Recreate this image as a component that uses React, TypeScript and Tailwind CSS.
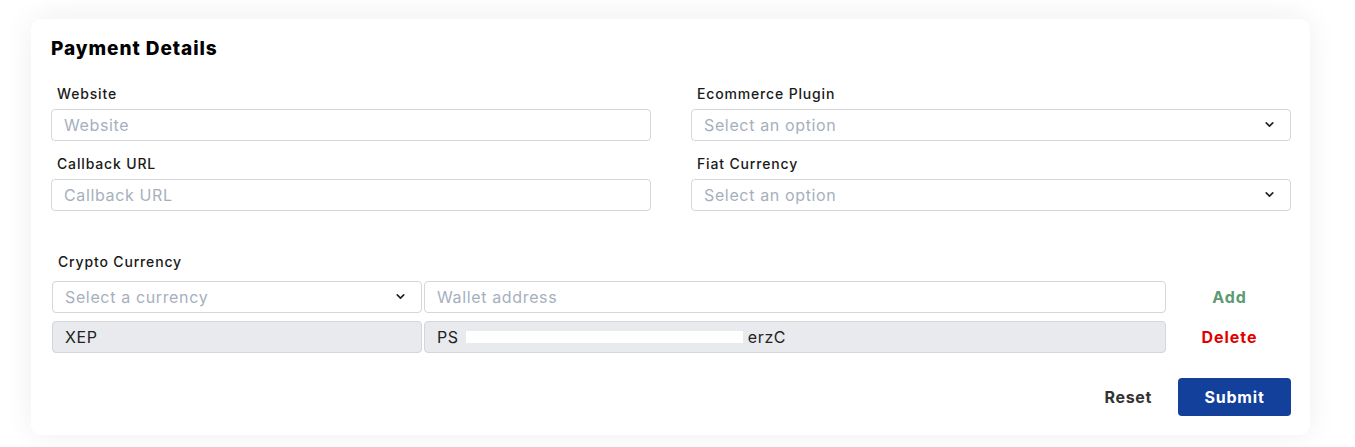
import { ChevronDown } from "lucide-react";

const font = { fontFamily: "Inter, 'Noto Sans', sans-serif" };

function Label({ children, className = "" }: { children: React.ReactNode; className?: string }) {
  return (
    <label
      className={`block h-5 text-[14px] font-medium leading-5 tracking-[0.06em] text-[#1a1a1a] ${className}`}
    >
      {children}
    </label>
  );
}

function TextInput({ placeholder }: { placeholder: string }) {
  return (
    <input
      placeholder={placeholder}
      className="h-8 w-full rounded-[4px] border border-[#d4d6da] bg-white px-3 pb-px text-[16px] tracking-[0.04em] text-gray-800 outline-none placeholder:text-[#a6b0bd]"
    />
  );
}

function SelectBox({ placeholder, className = "" }: { placeholder: string; className?: string }) {
  return (
    <div
      className={`flex h-8 items-center justify-between rounded-[4px] border border-[#d4d6da] bg-white pb-px pl-3 pr-[14px] text-[16px] tracking-[0.04em] text-[#a6b0bd] ${className}`}
    >
      <span>{placeholder}</span>
      <ChevronDown size={13} strokeWidth={3} className="text-[#222]" />
    </div>
  );
}

export default function App() {
  return (
    <div className="min-h-screen bg-white" style={font}>
      <div className="ml-[38px] h-[3px] w-[1272px] rounded-b-xl bg-white shadow-[0_0_30px_rgba(0,0,0,0.07)]" />
      <div className="ml-[31px] mt-4 w-[1279px] rounded-[10px] bg-white pb-[19px] pl-5 pr-[19px] pt-[16px] shadow-[0_0_30px_rgba(0,0,0,0.07)]">
        <h2 className="h-7 text-[19px] font-extrabold leading-7 tracking-[0.05em] text-black">Payment Details</h2>

        <div className="mt-[21px] grid w-[1240px] grid-cols-2 gap-x-10 gap-y-[13px]">
          <div>
            <Label className="mb-[5px] ml-[6px]">Website</Label>
            <TextInput placeholder="Website" />
          </div>
          <div>
            <Label className="mb-[5px] ml-[6px]">Ecommerce Plugin</Label>
            <SelectBox placeholder="Select an option" />
          </div>
          <div>
            <Label className="mb-[5px] ml-[6px]">Callback URL</Label>
            <TextInput placeholder="Callback URL" />
          </div>
          <div>
            <Label className="mb-[5px] ml-[6px]">Fiat Currency</Label>
            <SelectBox placeholder="Select an option" />
          </div>
        </div>

        <Label className="mb-[9px] ml-[7px] mt-[41px]">Crypto Currency</Label>
        <div className="ml-px flex flex-col gap-2">
          <div className="flex items-center gap-[2px]">
            <SelectBox placeholder="Select a currency" className="w-[370px]" />
            <div className="w-[742px]">
              <TextInput placeholder="Wallet address" />
            </div>
            <button className="flex-1 text-center text-[16px] font-bold tracking-[0.06em] text-[#5c9a72]">Add</button>
          </div>
          <div className="flex items-center gap-[2px]">
            <div className="flex h-8 w-[370px] items-center rounded-[4px] border border-[#d4d6da] bg-[#e8eaed] px-3 pb-px text-[16px] tracking-[0.04em] text-[#222]">
              XEP
            </div>
            <div className="flex h-8 w-[742px] items-center rounded-[4px] border border-[#d4d6da] bg-[#e8eaed] px-3 pb-px text-[16px] tracking-[0.04em] text-[#222]">
              <span>PS</span>
              <span className="ml-[7px] mr-[5px] inline-block h-[12px] w-[277px] bg-white" />
              <span>erzC</span>
            </div>
            <button className="flex-1 text-center text-[16px] font-bold tracking-[0.06em] text-[#e00000]">Delete</button>
          </div>
        </div>

        <div className="mt-[25px] flex items-center justify-end gap-[26px]">
          <button className="text-[16px] font-bold tracking-[0.04em] text-[#333]">Reset</button>
          <button className="h-[38px] w-[113px] rounded-[4px] bg-[#12409a] text-[16px] font-bold tracking-[0.05em] text-white">
            Submit
          </button>
        </div>
      </div>
    </div>
  );
}
